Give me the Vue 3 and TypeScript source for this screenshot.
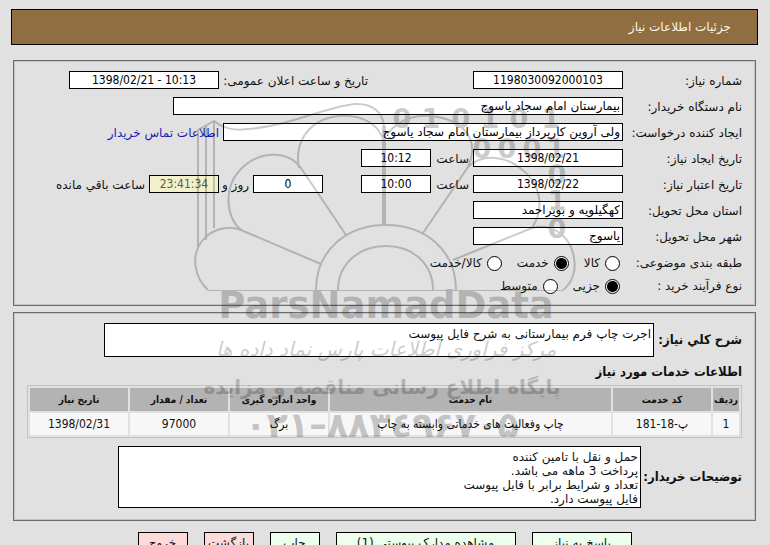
<script setup lang="ts">
import { ref } from 'vue'

interface ServiceRow {
  index: number
  code: string
  name: string
  unit: string
  quantity: string
  date: string
}

const category = ref('service')
const process = ref('minor')

const categories = [
  { value: 'goods', label: 'کالا' },
  { value: 'service', label: 'خدمت' },
  { value: 'both', label: 'کالا/خدمت' },
]
const processes = [
  { value: 'minor', label: 'جزیی' },
  { value: 'medium', label: 'متوسط' },
]

const rows: ServiceRow[] = [
  {
    index: 1,
    code: 'پ-18-181',
    name: 'چاپ وفعالیت های خدماتی وابسته به چاپ',
    unit: 'برگ',
    quantity: '97000',
    date: '1398/02/31',
  },
]

const description = 'اجرت چاپ فرم بیمارستانی به شرح فایل پیوست'
const notes = [
  'حمل و نقل با تامین کننده',
  'پرداخت 3 ماهه می باشد.',
  'تعداد و شرایط برابر با فایل پیوست',
  'فایل پیوست دارد.',
].join('\n')
</script>

<template>
  <main class="page" dir="rtl" lang="fa">
    <header class="title-bar"><h1>جزئیات اطلاعات نیاز</h1></header>

    <section class="panel details">
      <div class="row">
        <label class="caption" for="number">شماره نیاز:</label>
        <input id="number" class="field medium num" readonly value="1198030092000103" />
        <label class="announce" for="announce">تاریخ و ساعت اعلان عمومی:</label>
        <input id="announce" class="field medium num" readonly value="1398/02/21 - 10:13" />
      </div>
      <div class="row">
        <label class="caption" for="buyer">نام دستگاه خریدار:</label>
        <input id="buyer" class="field widest" readonly value="بیمارستان امام سجاد یاسوج" />
      </div>
      <div class="row">
        <label class="caption" for="creator">ایجاد کننده درخواست:</label>
        <input id="creator" class="field wide" readonly value="ولی آروین کارپرداز بیمارستان امام سجاد یاسوج" />
        <a href="#contact">اطلاعات تماس خریدار</a>
      </div>
      <div class="row">
        <label class="caption" for="created">تاریخ ایجاد نیاز:</label>
        <input id="created" class="field medium num" readonly value="1398/02/21" />
        <label class="hour" for="created-hour">ساعت</label>
        <input id="created-hour" class="field short num" readonly value="10:12" />
      </div>
      <div class="row">
        <label class="caption" for="valid">تاریخ اعتبار نیاز:</label>
        <input id="valid" class="field medium num" readonly value="1398/02/22" />
        <label class="hour" for="valid-hour">ساعت</label>
        <input id="valid-hour" class="field short num" readonly value="10:00" />
        <input id="days" class="field short num days" readonly value="0" />
        <label class="and" for="days">روز و</label>
        <input id="remaining" class="field short num countdown" readonly value="23:41:34" />
        <label for="remaining">ساعت باقي مانده</label>
      </div>
      <div class="row">
        <label class="caption" for="province">استان محل تحویل:</label>
        <input id="province" class="field medium" readonly value="کهگیلویه و بویراحمد" />
      </div>
      <div class="row">
        <label class="caption" for="city">شهر محل تحویل:</label>
        <input id="city" class="field medium" readonly value="یاسوج" />
      </div>
      <div class="options">
        <div class="row choices" role="radiogroup" aria-labelledby="category-caption">
          <span id="category-caption" class="caption">طبقه بندی موضوعی:</span>
          <label v-for="c in categories" :key="c.value" class="choice">
            <input v-model="category" type="radio" name="category" :value="c.value" />{{ c.label }}
          </label>
        </div>
        <div class="row choices" role="radiogroup" aria-labelledby="process-caption">
          <span id="process-caption" class="caption">نوع فرآیند خرید :</span>
          <label v-for="p in processes" :key="p.value" class="choice">
            <input v-model="process" type="radio" name="process" :value="p.value" />{{ p.label }}
          </label>
        </div>
      </div>
    </section>

    <section class="panel services">
      <div class="block-row">
        <label class="strong" for="description">شرح کلي نیاز:</label>
        <textarea id="description" class="area description" readonly :value="description"></textarea>
      </div>
      <h2>اطلاعات خدمات مورد نیاز</h2>
      <table>
        <colgroup>
          <col class="c-index" /><col class="c-side" /><col />
          <col class="c-side" /><col class="c-side" /><col class="c-side" />
        </colgroup>
        <thead>
          <tr>
            <th>ردیف</th>
            <th>کد خدمت</th>
            <th>نام خدمت</th>
            <th>واحد اندازه گیری</th>
            <th>تعداد / مقدار</th>
            <th>تاریخ نیاز</th>
          </tr>
        </thead>
        <tbody>
          <tr v-for="r in rows" :key="r.index">
            <td>{{ r.index }}</td>
            <td>{{ r.code }}</td>
            <td>{{ r.name }}</td>
            <td>{{ r.unit }}</td>
            <td>{{ r.quantity }}</td>
            <td>{{ r.date }}</td>
          </tr>
        </tbody>
      </table>
      <div class="block-row">
        <label class="strong notes-label" for="notes">توضیحات خریدار:</label>
        <textarea id="notes" class="area notes" readonly :value="notes"></textarea>
      </div>
    </section>

    <footer class="actions">
      <button type="button" class="reply">پاسخ به نیاز</button>
      <button type="button" class="docs">مشاهده مدارک پیوستی (1)</button>
      <button type="button">چاپ</button>
      <button type="button" class="danger">بازگشت</button>
      <button type="button" class="danger">خروج</button>
    </footer>

    <svg class="watermark" viewBox="190 100 390 345" width="390" height="345" direction="ltr" aria-hidden="true">
      <g fill="none" stroke="#000" stroke-width="2">
        <path d="M208 290.500H563" stroke-width="1" />
        <path d="M316 290C316 250 347 225 386 225S456 250 456 290" />
        <path d="M338 290C338 264 359 246 386 246S433 264 433 290" />
        <path d="M321 264L241 230C225 224 210 231 202 241C190 257 195 278 208 290" />
        <path d="M346 235L301 168C287 149 258 151 240 170C224 187 225 216 241 230" />
        <path d="M299 168C294 142 309 119 339 116C364 114 380 126 384 142" />
        <path d="M384 126V225" stroke-width="4" />
        <path d="M387 135C398 119 419 111 446 119C472 128 477 147 468 167L423 233" />
        <path d="M468 167C482 153 505 156 520 168C541 183 545 208 532 228" />
        <path d="M453 260L532 228C550 223 568 234 573 253C578 271 571 284 563 290" />
        <path d="M198 247V129M206 240V125M214 228V121" />
        <path d="M198 130L214 121C224 129 234 131 247 129C291 126 324 107 355 104C373 103 383 113 384 126" />
      </g>
      <g class="bits" text-anchor="middle">
        <text x="402" y="128">0</text><text x="431" y="128">1</text><text x="461" y="128">0</text>
        <text x="490" y="128">1</text><text x="519" y="128">0</text><text x="551" y="128">1</text>
        <text x="482" y="158">0</text><text x="507" y="158">0</text><text x="532" y="158">0</text><text x="556" y="158">1</text>
        <text x="557" y="184">0</text><text x="557" y="210">1</text><text x="557" y="238">0</text>
      </g>
      <g text-anchor="middle">
        <text class="brand" x="386" y="318">ParsNamadData</text>
        <text class="motto" x="386" y="356" direction="rtl">مرکز فرآوری اطلاعات پارس نماد داده ها</text>
        <text class="tagline" x="382" y="394" direction="rtl">پایگاه اطلاع رسانی مناقصه و مزایده</text>
        <text class="phone" x="382" y="437">۰۲۱–۸۸۳٤۹۶۷۰۵</text>
      </g>
    </svg>
  </main>
</template>

<style>
html {
  background: #e1e1e1;
  scrollbar-width: none;
}
</style>

<style scoped>
.page {
  position: relative;
  box-sizing: border-box;
  padding: 9px 12px 12px 11px;
  background: #e1e1e1;
  color: #111;
  font: 12px/18px 'DejaVu Sans', sans-serif;
  overflow: hidden;
}
.page * {
  box-sizing: border-box;
}
.title-bar {
  display: flex;
  align-items: center;
  height: 36px;
  padding: 0 26px;
  border: 1px solid #000;
  background: #906e42;
  color: #fff5e2;
}
h1,
h2 {
  margin: 0;
  font-size: 12px;
}
h1 {
  font-weight: normal;
}
.panel {
  border: 1px solid #6c6c6c;
  box-shadow: inset 0 0 0 1px #c4c4c4;
  margin: 0 2px;
  padding: 10px 13px;
}
.details {
  display: flex;
  flex-direction: column;
  gap: 8px;
  margin-top: 15px;
  padding-bottom: 9px;
}
.row {
  display: flex;
  align-items: center;
  gap: 4px;
  height: 18px;
  white-space: nowrap;
}
.row label,
.row a,
.caption {
  padding-top: 2px;
}
.caption {
  flex: 0 0 115px;
}
.field {
  flex: 0 1 auto;
  min-width: 0;
  height: 18px;
  margin: 0;
  padding: 0 2px;
  border: 1px solid #000;
  border-radius: 0;
  background: #fff;
  color: #000;
  font: inherit;
  outline: none;
}
.num {
  direction: ltr;
  text-align: center;
  font-family: 'DejaVu Sans Condensed', 'DejaVu Sans', sans-serif;
}
.short {
  width: 70px;
}
.medium {
  width: 150px;
}
.wide {
  width: 400px;
}
.widest {
  width: 450px;
}
.announce {
  width: 145px;
  margin-right: 101px;
}
.hour {
  width: 34px;
}
.days {
  margin-right: 34px;
}
.and {
  width: 26px;
}
.countdown {
  background: #f3f1cb;
  color: #5e5d45;
}
a {
  color: #1c1cb4;
  text-decoration: none;
}
.options {
  display: flex;
  flex-direction: column;
  gap: 3px;
}
.choices {
  height: 20px;
}
.choices .caption {
  flex-basis: 118px;
  padding-top: 0;
}
.row .choice {
  display: flex;
  align-items: center;
  gap: 5px;
  margin-left: 11px;
  padding-top: 0;
}
.choice input {
  appearance: none;
  width: 15px;
  height: 15px;
  margin: 0;
  border: 1px solid #000;
  border-radius: 50%;
  background: #fff;
}
.choice input:checked {
  background: radial-gradient(circle, #000 5px, #fff 6px);
}
.services {
  margin-top: 6px;
  padding-bottom: 12px;
}
.block-row {
  display: flex;
  align-items: center;
}
.strong,
h2 {
  font: bold 13px/18px 'DejaVu Sans Condensed', 'DejaVu Sans', sans-serif;
}
.strong {
  flex: 0 0 88px;
  white-space: nowrap;
}
.notes-label {
  flex-basis: 101px;
}
.area {
  display: block;
  min-width: 0;
  margin: 0;
  padding: 3px 2px;
  border: 1px solid #000;
  border-radius: 0;
  background: #fff;
  color: #111;
  font: inherit;
  line-height: 14px;
  resize: none;
  overflow: hidden;
  outline: none;
}
.description {
  width: 550px;
  height: 34px;
}
.notes {
  width: 523px;
  height: 62px;
}
h2 {
  margin: 6px 0 4px;
}
table {
  width: 100%;
  margin-bottom: 8px;
  table-layout: fixed;
  border: 1px solid #c3c3c3;
  border-spacing: 2px;
  text-align: center;
  font-family: 'DejaVu Sans Condensed', 'DejaVu Sans', sans-serif;
}
.c-index {
  width: 26px;
}
.c-side {
  width: 98px;
}
th,
td {
  padding: 0;
  white-space: nowrap;
}
th {
  height: 23px;
  background: #b3b3b3;
  font-size: 10px;
}
td {
  height: 22px;
  background: #f7f7f7;
}
.actions {
  display: flex;
  justify-content: center;
  gap: 16px;
  margin-top: 11px;
}
button {
  width: 50px;
  height: 22px;
  padding: 0;
  border: 1px solid #000;
  border-radius: 0;
  background: #edffed;
  color: #111;
  font: inherit;
  white-space: nowrap;
}
.reply {
  width: 100px;
}
.docs {
  width: 180px;
}
.danger {
  background: #ffdada;
}
.watermark {
  position: absolute;
  top: 100px;
  left: calc(50% - 195px);
  opacity: 0.2;
  pointer-events: none;
}
.bits {
  font: bold 27px 'DejaVu Sans', sans-serif;
}
.brand {
  font: bold 37px 'DejaVu Sans', sans-serif;
}
.motto {
  font: italic 20px 'DejaVu Sans', sans-serif;
}
.tagline {
  font: bold 20px 'DejaVu Sans', sans-serif;
}
.phone {
  font: bold 35px 'DejaVu Sans', sans-serif;
}
</style>
